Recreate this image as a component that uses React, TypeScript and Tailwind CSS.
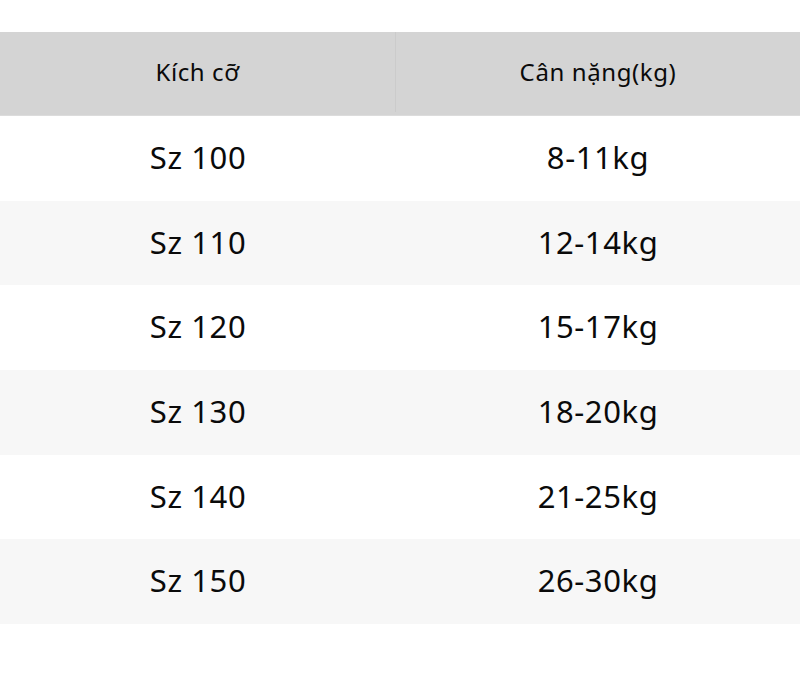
import React from "react";

const rows = [
  ["Sz 100", "8-11kg"],
  ["Sz 110", "12-14kg"],
  ["Sz 120", "15-17kg"],
  ["Sz 130", "18-20kg"],
  ["Sz 140", "21-25kg"],
  ["Sz 150", "26-30kg"],
];

export default function App() {
  return (
    <div className="w-[800px] h-[688px] bg-white pt-[32px]" style={{ fontFamily: '"Noto Sans", "Open Sans", sans-serif' }}>
      <div className="flex h-[84px] bg-[#d4d4d4] border-b border-[#dcdcdc] text-[24px] tracking-[0.6px] text-[#0a0a0a] pb-[3px]">
        <div className="w-[396px] flex items-center justify-center border-r border-[#cbcbcb]">Kích cỡ</div>
        <div className="flex-1 flex items-center justify-center">Cân nặng(kg)</div>
      </div>
      {rows.map((r, i) => (
        <div key={i} className={`flex h-[84.67px] text-[31px] tracking-[0.6px] text-[#0a0a0a] ${i % 2 === 1 ? "bg-[#f7f7f7]" : "bg-white"}`}>
          <div className="w-[396px] flex items-center justify-center pb-[2px]">{r[0]}</div>
          <div className="flex-1 flex items-center justify-center pb-[2px]">{r[1]}</div>
        </div>
      ))}
    </div>
  );
}
